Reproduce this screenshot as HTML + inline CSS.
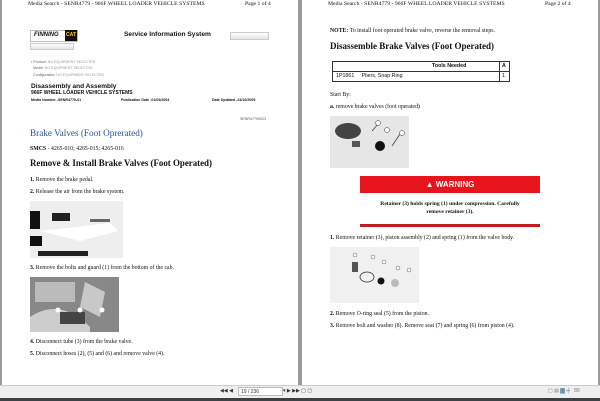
<!DOCTYPE html>
<html><head><meta charset="utf-8"><style>
*{margin:0;padding:0;box-sizing:border-box}
body{width:600px;height:401px;overflow:hidden;background:#9a9a9a;font-family:"Liberation Serif",serif;color:#111;position:relative}
.pg{position:absolute;top:0;height:385px;background:#fff}
.a{position:absolute;white-space:nowrap}
.t{font-size:5.8px}
.h{font-size:5.7px}
.sans{font-family:"Liberation Sans",sans-serif}
</style></head><body>
<div class="pg" style="left:2px;width:296px"></div>
<div class="pg" style="left:302px;width:296px"></div>

<!-- left page -->
<div class="a h" style="left:28px;top:1px">Media Search - SENR4779 - 966F WHEEL LOADER VEHICLE SYSTEMS</div>
<div class="a h" style="left:245px;top:1px">Page 1 of 4</div>
<div class="a" style="left:30px;top:30px;width:48px;height:12px;border:1px solid #bbb;background:#fff"></div>
<div class="a sans" style="left:34px;top:32px;font-size:6px;font-weight:bold;font-style:italic">FINNING</div>
<div class="a sans" style="left:65px;top:30px;width:12px;height:11px;background:#111;color:#fc0;font-size:5px;font-weight:bold;text-align:center;line-height:11px">CAT</div>
<div class="a" style="left:30px;top:43px;width:44px;height:7px;border:1px solid #ccc;background:linear-gradient(#fff,#e4e4e4)"></div>
<div class="a sans" style="left:124px;top:31px;font-size:6.6px;font-weight:bold">Service Information System</div>
<div class="a" style="left:230px;top:32px;width:39px;height:8px;border:1px solid #ccc;background:linear-gradient(#fff,#e4e4e4)"></div>
<div class="a sans" style="left:31px;top:59px;font-size:3.6px;color:#666;line-height:6.3px">• Product: <span style="color:#999">NO EQUIPMENT SELECTED</span><br>&nbsp;&nbsp;Model: <span style="color:#999">NO EQUIPMENT SELECTED</span><br>&nbsp;&nbsp;Configuration: <span style="color:#999">NO EQUIPMENT SELECTED</span></div>
<div class="a sans" style="left:31px;top:83px;font-size:6.5px;font-weight:bold">Disassembly and Assembly</div>
<div class="a sans" style="left:31px;top:90px;font-size:5px;font-weight:bold">966F WHEEL LOADER VEHICLE SYSTEMS</div>
<div class="a sans" style="left:31px;top:98px;font-size:3.6px;font-weight:bold">Media Number -SENR4779-01</div>
<div class="a sans" style="left:121px;top:98px;font-size:3.6px;font-weight:bold">Publication Date -01/03/2004</div>
<div class="a sans" style="left:212px;top:98px;font-size:3.6px;font-weight:bold">Date Updated -24/10/2005</div>
<div class="a sans" style="left:240px;top:117px;font-size:3.6px;color:#555">SENR47790023</div>
<div class="a" style="left:30px;top:128px;font-size:9.2px;color:#2a5590">Brake Valves (Foot Oprerated)</div>
<div class="a t" style="left:30px;top:146px"><b>SMCS</b> - 4265-010; 4265-015; 4265-016</div>
<div class="a" style="left:30px;top:158px;font-size:8.9px;font-weight:bold">Remove &amp; Install Brake Valves (Foot Operated)</div>
<div class="a t" style="left:30px;top:177px"><b>1.</b> Remove the brake pedal.</div>
<div class="a t" style="left:30px;top:189px"><b>2.</b> Release the air from the brake system.</div>
<svg class="a" style="left:30px;top:201px" width="93" height="57"><rect width="93" height="57" fill="#eee"/><rect x="0" y="10" width="10" height="18" fill="#111"/><rect x="22" y="12" width="18" height="8" fill="#222"/><path d="M10 30 L80 22 L88 30 L50 40 Z" fill="#fff"/><rect x="0" y="35" width="12" height="10" fill="#111"/><rect x="8" y="50" width="50" height="5" fill="#222"/><rect x="60" y="18" width="20" height="3" fill="#666"/></svg>
<div class="a t" style="left:30px;top:265px"><b>3.</b> Remove the bolts and guard (1) from the bottom of the cab.</div>
<svg class="a" style="left:30px;top:277px" width="89" height="55"><rect width="89" height="55" fill="#888"/><rect x="5" y="5" width="40" height="20" fill="#bbb"/><path d="M0 40 Q30 20 60 50 L60 55 L0 55Z" fill="#ccc"/><path d="M55 5 L75 15 L70 40 L50 30Z" fill="#c8c8c8"/><rect x="30" y="35" width="25" height="12" fill="#444"/><circle cx="28" cy="33" r="2.5" fill="#fff"/><circle cx="50" cy="33" r="2.5" fill="#fff"/><circle cx="72" cy="33" r="2.5" fill="#fff"/></svg>
<div class="a t" style="left:30px;top:339px"><b>4.</b> Disconnect tube (3) from the brake valve.</div>
<div class="a t" style="left:30px;top:351px"><b>5.</b> Disconnect hoses (2), (5) and (6) and remove valve (4).</div>

<!-- right page -->
<div class="a h" style="left:328px;top:1px">Media Search - SENR4779 - 966F WHEEL LOADER VEHICLE SYSTEMS</div>
<div class="a h" style="left:545px;top:1px">Page 2 of 4</div>
<div class="a t" style="left:330px;top:28px"><b>NOTE:</b> To install foot operated brake valve, reverse the removal steps.</div>
<div class="a" style="left:330px;top:41px;font-size:9px;font-weight:bold">Disassemble Brake Valves (Foot Operated)</div>
<div class="a" style="left:332px;top:61px;width:178px;height:21px;border:1px solid #333"></div>
<div class="a" style="left:332px;top:71px;width:178px;height:1px;background:#333"></div>
<div class="a" style="left:499px;top:61px;width:1px;height:21px;background:#333"></div>
<div class="a sans" style="left:432px;top:63px;font-size:5.3px;font-weight:bold">Tools Needed</div>
<div class="a sans" style="left:502px;top:63px;font-size:5.3px;font-weight:bold">A</div>
<div class="a sans" style="left:336px;top:73px;font-size:5.3px">1P1861 &nbsp;&nbsp;&nbsp;&nbsp;Pliers, Snap Ring</div>
<div class="a sans" style="left:502px;top:73px;font-size:5.3px">1</div>
<div class="a t" style="left:330px;top:92px">Start By:</div>
<div class="a t" style="left:330px;top:104px"><b>a.</b> remove brake valves (foot operated)</div>
<svg class="a" style="left:330px;top:116px" width="79" height="52"><rect width="79" height="52" fill="#e6e6e6"/><ellipse cx="18" cy="15" rx="13" ry="8" fill="#444"/><rect x="22" y="25" width="8" height="6" fill="#555"/><circle cx="50" cy="30" r="5" fill="#111"/><path d="M62 30 L70 18 M42 15 L48 8" stroke="#333" stroke-width=".7"/><circle cx="48" cy="7" r="2.5" fill="#fff" stroke="#333" stroke-width=".5"/><circle cx="57" cy="14" r="2.5" fill="#fff" stroke="#333" stroke-width=".5"/><circle cx="72" cy="17" r="2.5" fill="#fff" stroke="#333" stroke-width=".5"/></svg>
<div class="a sans" style="left:360px;top:176px;width:180px;height:17px;background:#e8141c;color:#fff;font-size:8px;font-weight:bold;text-align:center;line-height:17px">▲ WARNING</div>
<div class="a" style="left:375px;top:201px;width:150px;text-align:center;white-space:normal;font-size:5.6px;font-weight:bold;line-height:7.5px">Retainer (3) holds spring (1) under compression. Carefully remove retainer (3).</div>
<div class="a" style="left:360px;top:224px;width:180px;height:3px;background:#c01c22"></div>
<div class="a t" style="left:330px;top:235px"><b>1.</b> Remove retainer (3), piston assembly (2) and spring (1) from the valve body.</div>
<svg class="a" style="left:330px;top:247px" width="89" height="56"><rect width="89" height="56" fill="#f0f0f0"/><rect x="22" y="15" width="6" height="10" fill="#555"/><ellipse cx="37" cy="30" rx="7" ry="5" fill="none" stroke="#333" stroke-width=".8"/><circle cx="51" cy="34" r="3.5" fill="#111"/><circle cx="65" cy="36" r="4" fill="#bbb"/><circle cx="25" cy="8" r="2" fill="#fff" stroke="#333" stroke-width=".4"/><circle cx="43" cy="10" r="2" fill="#fff" stroke="#333" stroke-width=".4"/><circle cx="54" cy="15" r="2" fill="#fff" stroke="#333" stroke-width=".4"/><circle cx="68" cy="21" r="2" fill="#fff" stroke="#333" stroke-width=".4"/><circle cx="79" cy="23" r="2" fill="#fff" stroke="#333" stroke-width=".4"/></svg>
<div class="a t" style="left:330px;top:311px"><b>2.</b> Remove O-ring seal (5) from the piston.</div>
<div class="a t" style="left:330px;top:323px"><b>3.</b> Remove bolt and washer (8). Remove seat (7) and spring (6) from piston (4).</div>

<!-- toolbar -->
<div class="a" style="left:0;top:385px;width:600px;height:13px;background:#efefef;border-top:1px solid #ccc"></div>
<div class="a" style="left:0;top:398px;width:600px;height:3px;background:#3a4048"></div>
<div class="a sans" style="left:220px;top:388px;font-size:5px;color:#333">◀◀ ◀</div>
<div class="a sans" style="left:238px;top:387px;width:45px;height:9px;border:1px solid #bbb;background:#fff;font-size:5px;line-height:8px;padding-left:2px;color:#333">19 / 236</div>
<div class="a sans" style="left:283px;top:388px;font-size:5px;color:#333">▾ ▶ ▶▶ ▢ ▢</div>
<div class="a sans" style="left:548px;top:388px;font-size:5px;color:#777">▢ ▤ <span style="background:#9bc;color:#357">▥</span> ╪ &nbsp; 89</div>
</body></html>
